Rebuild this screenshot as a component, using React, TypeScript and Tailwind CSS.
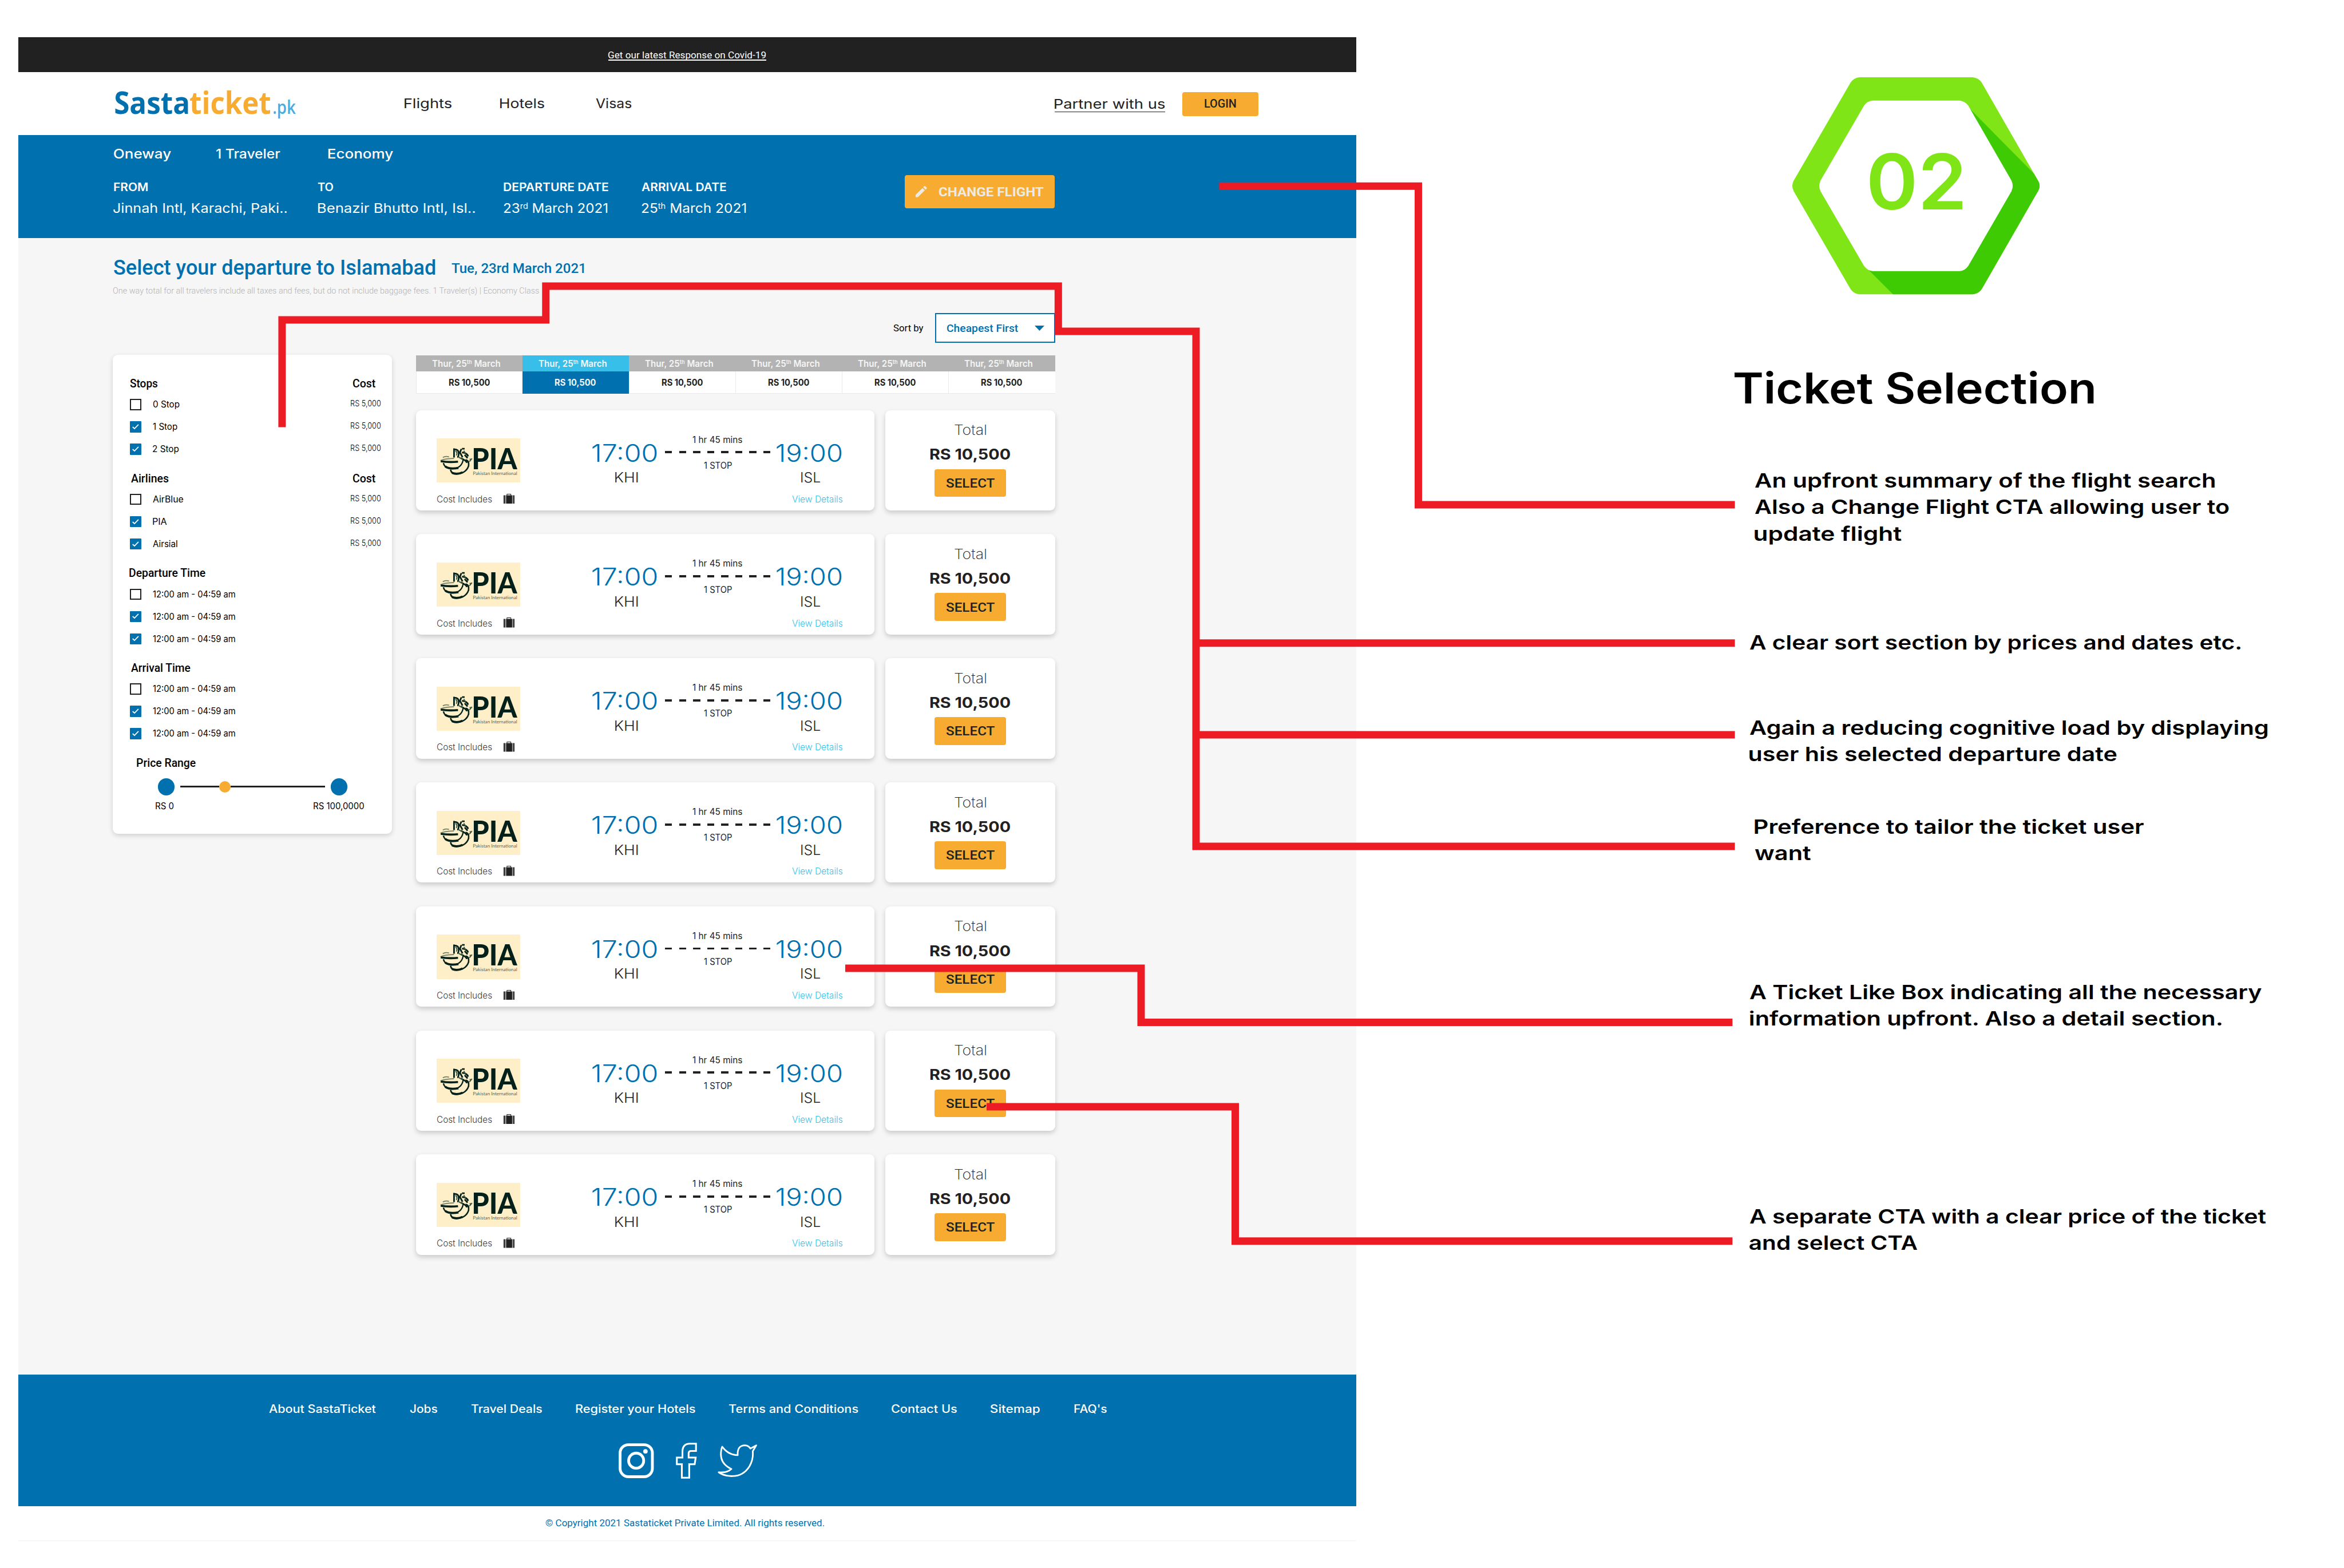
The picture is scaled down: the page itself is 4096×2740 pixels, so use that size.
import { useLayoutEffect, useRef, useState, type ReactNode } from "react";

/* Text set to an exact ink width, condensed or expanded horizontally to fit. */
function Fit({ w, className = "", children }: { w: number; className?: string; children: ReactNode }) {
  const ref = useRef<HTMLSpanElement>(null);
  const [t, setT] = useState({ s: 1, dx: 0 });
  useLayoutEffect(() => {
    const el = ref.current;
    if (!el) return;
    if (typeof children === "string") {
      const cs = getComputedStyle(el);
      const ctx = document.createElement("canvas").getContext("2d");
      if (!ctx) return;
      ctx.font = `${cs.fontWeight} ${cs.fontSize} ${cs.fontFamily}`;
      const m = ctx.measureText(children);
      const s = w / (m.actualBoundingBoxLeft + m.actualBoundingBoxRight);
      setT({ s, dx: m.actualBoundingBoxLeft * s });
    } else {
      setT({ s: w / el.offsetWidth, dx: 0 });
    }
  }, [children, w]);
  return (
    <span className={`block shrink-0 whitespace-nowrap leading-none ${className}`} style={{ width: w }}>
      <span
        ref={ref}
        className="inline-block origin-left leading-none"
        style={{ transform: `translateX(${t.dx}px) scaleX(${t.s})` }}
      >
        {children}
      </span>
    </span>
  );
}

function TopBar() {
  return (
    <div className="flex h-[61px] items-center justify-center bg-[#212121] pt-[2px]">
      <div className="border-b-2 border-white">
        <Fit w={275.5} className="h-[16px] font-[Roboto] text-[17px] text-white">
          Get our latest Response on Covid-19
        </Fit>
      </div>
    </div>
  );
}

function Header() {
  return (
    <header className="flex h-[110px] items-center bg-white pl-[168.7px] pt-[2px] text-[23.2px] font-[380] text-[#212121]">
      <div className="mb-[8px] flex items-baseline font-['Open_Sans'] text-[54px] font-bold">
        <Fit w={127.7} className="text-[#0070AE]">Sasta</Fit>
        <Fit w={140.4} className="ml-[3.6px] text-[#F7AC31]">ticket</Fit>
        <Fit w={39.4} className="ml-[5.2px] text-[32px] font-semibold text-[#4AABDF]">.pk</Fit>
      </div>
      <Fit w={83} className="ml-[190px]">Flights</Fit>
      <Fit w={77.8} className="ml-[84.4px]">Hotels</Fit>
      <Fit w={63} className="ml-[89px]">Visas</Fit>
      <div className="ml-[738.5px] mt-[3px] border-b-[1.5px] border-[#212121]">
        <Fit w={193.2}>Partner with us</Fit>
      </div>
      <div className="ml-[30.5px] flex h-[42px] w-[133px] items-center justify-center rounded-[4px] bg-[#F7AC31]">
        <Fit w={55} className="font-[Roboto] text-[19.5px] font-medium">LOGIN</Fit>
      </div>
    </header>
  );
}

function Hero() {
  return (
    <section className="h-[180px] bg-[#0070AE] pl-[167px] pt-[21.5px] text-white">
      <div className="flex text-[22.8px] font-medium">
        <Fit w={100}>Oneway</Fit>
        <Fit w={112} className="ml-[79px]">1 Traveler</Fit>
        <Fit w={114} className="ml-[82.5px]">Economy</Fit>
      </div>
      <div className="mt-[25.5px] flex items-start text-[23.4px] font-[380]">
        <div className="w-[356.7px] pt-[12px]">
          <Fit w={59.2} className="text-[19.5px] font-semibold">FROM</Fit>
          <Fit w={302.8} className="mt-[14.5px] -ml-[1px]">Jinnah Intl, Karachi, Paki..</Fit>
        </div>
        <div className="w-[324.4px] pt-[12px]">
          <Fit w={26.9} className="-ml-[1px] text-[19.5px] font-semibold">TO</Fit>
          <Fit w={273.7} className="mt-[14.5px]">Benazir Bhutto Intl, Isl..</Fit>
        </div>
        <div className="w-[241.4px] pt-[12px]">
          <Fit w={183} className="text-[19.5px] font-semibold">DEPARTURE DATE</Fit>
          <Fit w={184} className="-ml-[1px] mt-[14.5px]">23<sup className="text-[60%]">rd</sup> March 2021</Fit>
        </div>
        <div className="w-[459.3px] pt-[12px]">
          <Fit w={147.8} className="text-[19.5px] font-semibold">ARRIVAL DATE</Fit>
          <Fit w={185} className="-ml-[1px] mt-[14.5px]">25<sup className="text-[60%]">th</sup> March 2021</Fit>
        </div>
        <div className="flex h-[58.7px] w-[262.6px] items-center rounded-[4px] bg-[#F7AC31] pl-[19.7px] text-[#EDEAE6]">
          <svg viewBox="3 3 18 18" className="size-[19.6px]" fill="currentColor">
            <path d="M3 17.25V21h3.75L17.81 9.94l-3.75-3.75L3 17.25zM20.71 7.04a1 1 0 0 0 0-1.41l-2.34-2.34a1 1 0 0 0-1.41 0l-1.83 1.83 3.75 3.75 1.83-1.83z" />
          </svg>
          <Fit w={183.7} className="ml-[20px] mt-[2px] font-[Roboto] text-[22.8px] font-bold">CHANGE FLIGHT</Fit>
        </div>
      </div>
    </section>
  );
}

function CheckBox({ on }: { on: boolean }) {
  if (!on) return <span className="size-[19.4px] shrink-0 border-2 border-[#212121] bg-white" />;
  return (
    <span className="flex size-[19.4px] shrink-0 items-center justify-center rounded-[1px] bg-[#0070AE]">
      <svg viewBox="0 0 12 10" className="w-[11.5px]" fill="none" stroke="white" strokeWidth="1.9">
        <path d="M0.8 5.2 4.2 8.4 11.4 1" />
      </svg>
    </span>
  );
}

type Option = { label: string; w: number };
type Group = { title: string; w: number; ml: string; cost: boolean; options: Option[] };

const TIMES: Option[] = [
  { label: "12:00 am - 04:59 am", w: 144.2 },
  { label: "12:00 am - 04:59 am", w: 144.2 },
  { label: "12:00 am - 04:59 am", w: 144.2 },
];

const GROUPS: Group[] = [
  {
    title: "Stops", w: 48.6, ml: "ml-[0px]", cost: true,
    options: [{ label: "0 Stop", w: 46.6 }, { label: "1 Stop", w: 42.8 }, { label: "2 Stop", w: 45.5 }],
  },
  {
    title: "Airlines", w: 65.6, ml: "ml-[1.3px]", cost: true,
    options: [{ label: "AirBlue", w: 53.8 }, { label: "PIA", w: 25.2 }, { label: "Airsial", w: 43 }],
  },
  { title: "Departure Time", w: 133.8, ml: "-ml-[1px]", cost: false, options: TIMES },
  { title: "Arrival Time", w: 104.6, ml: "ml-[1.3px]", cost: false, options: TIMES },
];

function Filters() {
  return (
    <aside className="h-[837.5px] w-[488px] shrink-0 rounded-[9px] bg-white pl-[30.3px] pt-[40.5px] text-black shadow-[0_3px_8px_rgba(0,0,0,0.16)]">
      {GROUPS.map((g) => (
        <div key={g.title} className="h-[165.6px]">
          <div className="flex h-[20px] items-center font-[Roboto] text-[20px] font-medium">
            <Fit w={g.w} className={g.ml}>{g.title}</Fit>
            {g.cost && <Fit w={39.7} className="ml-auto mr-[28.3px]">Cost</Fit>}
          </div>
          <div className="mt-[7.3px]">
            {g.options.map((o, i) => (
              <div key={i} className="flex h-[39px] items-center text-[15.3px]">
                <CheckBox on={i > 0} />
                <Fit w={o.w} className="ml-[20px]">{o.label}</Fit>
                {g.cost && <Fit w={52} className="mb-[3px] ml-auto mr-[20px] text-[14.4px] font-light">RS 5,000</Fit>}
              </div>
            ))}
          </div>
        </div>
      ))}
      <Fit w={103.5} className="ml-[12px] font-[Roboto] text-[20px] font-medium">Price Range</Fit>
      <div className="mt-[17.5px] flex items-center pl-[48.6px]">
        <span className="size-[29.4px] rounded-full bg-[#0070AE]" />
        <span className="ml-[10px] h-[3px] w-[68px] bg-[#212121]" />
        <span className="size-[19.3px] rounded-full bg-[#F7AC31]" />
        <span className="h-[3px] w-[165.2px] bg-[#212121]" />
        <span className="ml-[10.3px] size-[29.4px] rounded-full bg-[#0070AE]" />
      </div>
      <div className="mt-[11.5px] flex pl-[44.8px] text-[15.3px]">
        <Fit w={31.4}>RS 0</Fit>
        <Fit w={88} className="ml-[244.9px]">RS 100,0000</Fit>
      </div>
    </aside>
  );
}

function DateStrip() {
  return (
    <div className="flex h-[66.7px] w-[1117px]">
      {[0, 1, 2, 3, 4, 5].map((i) => (
        <div key={i} className="flex flex-1 flex-col">
          <div className={`flex h-[27.7px] items-center justify-center text-[16px] font-semibold text-[#F5F5F5] ${i === 1 ? "bg-[#37BFE9]" : "bg-[#B3B3B3]"}`}>
            <Fit w={120} className="-ml-[10px]">Thur, 25<sup className="text-[60%]">th</sup> March</Fit>
          </div>
          <div className={`flex flex-1 items-center justify-center pt-[1px] text-[15.6px] font-bold ${i === 1 ? "bg-[#0070AE] text-[#F5F5F5]" : "border-b-[1.5px] border-l-[1.5px] border-[#E9E9E9] bg-white text-[#212121]"}`}>
            <Fit w={71}>RS 10,500</Fit>
          </div>
        </div>
      ))}
    </div>
  );
}

function PiaLogo() {
  return (
    <svg viewBox="0 0 567 300" className="h-[77.3px] w-[146px] overflow-visible bg-[#FEEFC8]" fill="none" stroke="#03211A">
      <path strokeWidth="7" stroke="#6F8262" d="M42 130Q60 118 84 126" />
      <path strokeWidth="8" d="M26 152Q50 138 118 136" opacity="0.5" />
      <path strokeWidth="14" d="M28 155Q80 164 145 158" />
      <path strokeWidth="9" d="M46 168Q54 204 104 206Q168 206 180 146" />
      <path strokeWidth="15" d="M58 190Q88 212 148 200" />
      <path strokeWidth="10" d="M94 212Q100 240 130 242Q200 240 217 186Q222 150 196 146" />
      <path strokeWidth="14" d="M104 234Q140 248 176 230" />
      <path strokeWidth="11" d="M118 68V130M118 74Q150 74 150 100T140 128M168 72 158 96 176 128M172 70H190M172 96Q204 96 214 122M190 112 210 134M164 134Q200 150 206 166" />
      <path strokeWidth="8" stroke="#3E5A48" d="M128 84Q144 96 134 116M184 84 196 104M150 128 176 142M222 158 240 136M226 138 232 150" />
      <text x="238" y="209" textLength="308" lengthAdjust="spacingAndGlyphs" fontFamily="Lato" fontWeight="900" fontSize="203" fill="#03211A" stroke="none">PIA</text>
      <text x="246" y="247" textLength="300" lengthAdjust="spacingAndGlyphs" fontFamily="Lato" fontSize="28" fill="#5E6650" stroke="none">Pakistan International</text>
    </svg>
  );
}

function Suitcase() {
  return (
    <svg viewBox="0 0 75 68" className="ml-[20px] h-[17.5px] w-[19.3px]">
      <path fill="#212121" d="M0 10H10V68H0zM17 10H58V68H17zM65 10H75V68H65z" />
      <path fill="#8C8C8C" d="M10 10H17V68H10zM58 10H65V68H58z" />
      <path fill="none" stroke="#212121" strokeWidth="4" d="M23 12V2H49V12" />
    </svg>
  );
}

function Ticket() {
  return (
    <div className="flex h-[175.4px] gap-[19px] text-[#212121]">
      <div className="flex w-[801.4px] flex-col rounded-[9px] bg-white pl-[36.4px] shadow-[0_4px_8px_rgba(0,0,0,0.18)]">
        <div className="flex h-[127px]">
          <div className="pt-[49.5px]"><PiaLogo /></div>
          <div className="ml-[126px] w-[112.2px] pt-[54px] font-light">
            <Fit w={113.1} className="text-[42px] text-[#0070AE]">17:00</Fit>
            <Fit w={40.3} className="ml-[40px] mt-[9.5px] text-[24.5px]">KHI</Fit>
          </div>
          <div className="ml-[15px] flex w-[184px] flex-col items-center pt-[44px] text-[15.3px]">
            <Fit w={87.3}>1 hr 45 mins</Fit>
            <div className="mt-[12.5px] flex w-full justify-between">
              {[0, 1, 2, 3, 4, 5, 6, 7].map((i) => (
                <span key={i} className="h-[3.8px] w-[12.4px] bg-[#212121]" />
              ))}
            </div>
            <Fit w={48.6} className="mt-[13.5px]">1 STOP</Fit>
          </div>
          <div className="ml-[11px] w-[114px] pt-[54px] font-light">
            <Fit w={113.8} className="text-[42px] text-[#0070AE]">19:00</Fit>
            <Fit w={33.4} className="ml-[43px] mt-[9.5px] text-[24.5px]">ISL</Fit>
          </div>
        </div>
        <div className="mt-[19px] flex items-center text-[15.3px] font-light">
          <Fit w={97.2} className="mt-[2px] text-[#3A3A3A]">Cost Includes</Fit>
          <Suitcase />
          <Fit w={88.8} className="ml-auto mr-[55.4px] mt-[2px] text-[#37BFE9]">View Details</Fit>
        </div>
      </div>
      <div className="flex w-[296.7px] flex-col items-center rounded-[9px] bg-white pt-[22.5px] shadow-[0_4px_8px_rgba(0,0,0,0.18)]">
        <Fit w={55.4} className="text-[24.5px] font-[250]">Total</Fit>
        <Fit w={140.5} className="mt-[17.8px] text-[26px] font-[680]">RS 10,500</Fit>
        <div className="mt-[12.2px] flex h-[48.7px] w-[125.2px] items-center justify-center rounded-[4px] bg-[#F7AC31] pt-[1.5px]">
          <Fit w={85} className="font-[Roboto] text-[21.9px] font-medium">SELECT</Fit>
        </div>
      </div>
    </div>
  );
}

function Results() {
  return (
    <section className="h-[1986px] bg-[#F6F6F6] pl-[165px] pt-[34px]">
      <div className="ml-[2px] flex items-center font-[Roboto] font-medium text-[#0070AE]">
        <Fit w={562} className="text-[36px]">Select your departure to Islamabad</Fit>
        <Fit w={232} className="ml-[27.5px] mt-[2px] text-[24.4px]">Tue, 23rd March 2021</Fit>
      </div>
      <Fit w={748.7} className="mt-[14.7px] font-[Roboto] text-[14.6px] font-light text-[#B3B3B3]">
        {"One way total for all travelers  include all taxes and fees, but do not include baggage fees. 1 Traveler(s) | Economy Class"}
      </Fit>
      <div className="mt-[32px] flex h-[52px] w-[1646.6px] items-center justify-end font-[Roboto]">
        <Fit w={53} className="mr-[20px] mt-[2px] text-[16px] text-black">Sort by</Fit>
        <div className="flex h-full w-[209.4px] items-center border-2 border-[#0070AE] bg-white pl-[18px] text-[#0070AE]">
          <Fit w={125.2} className="mt-[1px] text-[18.3px] font-medium">Cheapest First</Fit>
          <svg viewBox="0 0 17 9" className="ml-[28.5px] h-[9px] w-[17px]" fill="currentColor">
            <path d="M0 0H17L8.5 9z" />
          </svg>
        </div>
      </div>
      <div className="mt-[20.5px] flex">
        <Filters />
        <div className="ml-[41.5px] pt-[1.5px]">
          <DateStrip />
          <div className="mt-[28.7px] flex flex-col gap-[41.4px]">
            {[0, 1, 2, 3, 4, 5, 6].map((i) => (
              <Ticket key={i} />
            ))}
          </div>
        </div>
      </div>
    </section>
  );
}

const LINKS = [
  { label: "About SastaTicket", w: 187.3 },
  { label: "Jobs", w: 48.3 },
  { label: "Travel Deals", w: 124.2 },
  { label: "Register your Hotels", w: 209 },
  { label: "Terms and Conditions", w: 226.6 },
  { label: "Contact Us", w: 114.3 },
  { label: "Sitemap", w: 86.7 },
  { label: "FAQ's", w: 57.2 },
];

function Footer() {
  return (
    <footer>
      <div className="h-[230px] bg-[#0070AE] pl-[438px] pt-[51px] text-white">
        <div className="flex gap-[58.6px] text-[19.4px] font-medium">
          {LINKS.map((l) => (
            <Fit key={l.label} w={l.w}>{l.label}</Fit>
          ))}
        </div>
        <svg viewBox="28 70 940 245" className="ml-[611px] mt-[49px] h-[63.1px] w-[242.1px]" fill="none" stroke="white">
          <rect x="38" y="84" width="219" height="217" rx="56" strokeWidth="19" />
          <circle cx="147" cy="192" r="51" strokeWidth="19" />
          <circle cx="210" cy="129" r="15" fill="white" stroke="none" />
          <path strokeWidth="12" d="M457 308V216H423V171H461V132Q461 77 512 77H553V126H520Q503 126 503 142V171H551L544 216H507V308Z" />
          <path strokeWidth="11" strokeLinejoin="round" d="M731 97Q770 153 836 155Q832 88 886 88Q910 90 922 110L962 88L938 128Q944 180 916 230Q875 296 800 297Q745 298 707 271Q765 276 793 249Q722 215 722 150Q722 118 731 97Z" />
        </svg>
      </div>
      <div className="flex h-[61px] items-center justify-center border-b-[1.5px] border-[#F2F2F2] bg-white">
        <Fit w={487.8} className="-ml-[8px] mt-[1px] font-[Roboto] text-[16.6px] text-[#0070AE]">
          © Copyright 2021 Sastaticket Private Limited. All rights reserved.
        </Fit>
      </div>
    </footer>
  );
}

type Note = { pos: string; lines: { text: string; w: number }[] };

const NOTES: Note[] = [
  {
    pos: "ml-[695.5px] mt-[101.8px]",
    lines: [
      { text: "An upfront summary of the flight search", w: 804.4 },
      { text: "Also a Change Flight CTA allowing user to", w: 829.3 },
      { text: "update flight", w: 257.3 },
    ],
  },
  { pos: "ml-[687px] mt-[143.3px]", lines: [{ text: "A clear sort section by prices and dates etc.", w: 859 }] },
  {
    pos: "ml-[687px] mt-[102.6px]",
    lines: [
      { text: "Again a reducing cognitive load by displaying", w: 905 },
      { text: "user his selected departure date", w: 641.6 },
    ],
  },
  {
    pos: "ml-[695.5px] mt-[80.3px]",
    lines: [
      { text: "Preference to tailor the ticket user", w: 680 },
      { text: "want", w: 98.7 },
    ],
  },
  {
    pos: "ml-[687px] mt-[196.2px]",
    lines: [
      { text: "A Ticket Like Box indicating all the necessary", w: 895.5 },
      { text: "information upfront. Also a detail section.", w: 826.5 },
    ],
  },
  {
    pos: "ml-[687px] mt-[299.7px]",
    lines: [
      { text: "A separate CTA with a clear price of the ticket", w: 903 },
      { text: "and select CTA", w: 293.2 },
    ],
  },
];

function Annotations() {
  return (
    <aside className="flex flex-col text-black">
      <div className="ml-[761.6px] mt-[135.4px] grid h-[379.2px] w-[432.2px]">
        <svg viewBox="318 131 877 855" preserveAspectRatio="none" className="col-start-1 row-start-1 h-full w-full">
          <path fill="#7FE517" d="M556 131H957Q979 133 990 153L1189 538Q1201 559 1189 580L990 965Q979 984 957 986H556Q535 984 524 965L323 580Q313 559 323 538L524 153Q535 133 556 131Z" />
          <path fill="#3FCB04" d="M950 258 1175 511 1189 538Q1201 559 1189 580L990 965Q979 984 957 986H675L590 892Z" />
          <path fill="white" d="M602 223H911Q930 225 942 243L1095 538Q1104 559 1095 580L942 874Q930 894 911 895H602Q583 892 572 874L418 580Q409 559 418 538L572 243Q583 225 602 223Z" />
        </svg>
        <div className="col-start-1 row-start-1 flex items-start justify-center pt-[115px] pl-[2px] text-[134px] font-semibold text-[#7FE517]">
          <Fit w={162.6}>02</Fit>
        </div>
      </div>
      <Fit w={628} className="ml-[661px] mt-[126px] text-[74.5px] font-[580]">Ticket Selection</Fit>
      {NOTES.map((n) => (
        <div key={n.lines[0].text} className={n.pos}>
          {n.lines.map((l) => (
            <div key={l.text} className="flex h-[46.4px] items-center text-[34px] font-[580]">
              <Fit w={l.w}>{l.text}</Fit>
            </div>
          ))}
        </div>
      ))}
    </aside>
  );
}

function Connectors() {
  return (
    <svg viewBox="0 0 4096 2740" className="pointer-events-none absolute inset-0 h-[2740px] w-[4096px]" fill="none" stroke="#ED1C24" strokeWidth="13">
      <path d="M2130.4 325.2H2478.5V882H3031.6" />
      <path d="M492.9 746.4V559H953.8V499.9H1849.3V579H2090V1478.9H3031.6" />
      <path d="M2090 1123.7H3031.6M2090 1284H3031.6" />
      <path d="M1477 1692H1994V1786.4H3027.4" />
      <path d="M1724 1934H2158.5V2168.7H3027.4" />
    </svg>
  );
}

export default function App() {
  return (
    <div className="relative flex h-[2740px] w-[4096px] items-start overflow-hidden bg-white font-[Inter,sans-serif]">
      <main className="ml-[32px] mt-[65px] w-[2338px] shrink-0">
        <TopBar />
        <Header />
        <Hero />
        <Results />
        <Footer />
      </main>
      <Annotations />
      <Connectors />
    </div>
  );
}
